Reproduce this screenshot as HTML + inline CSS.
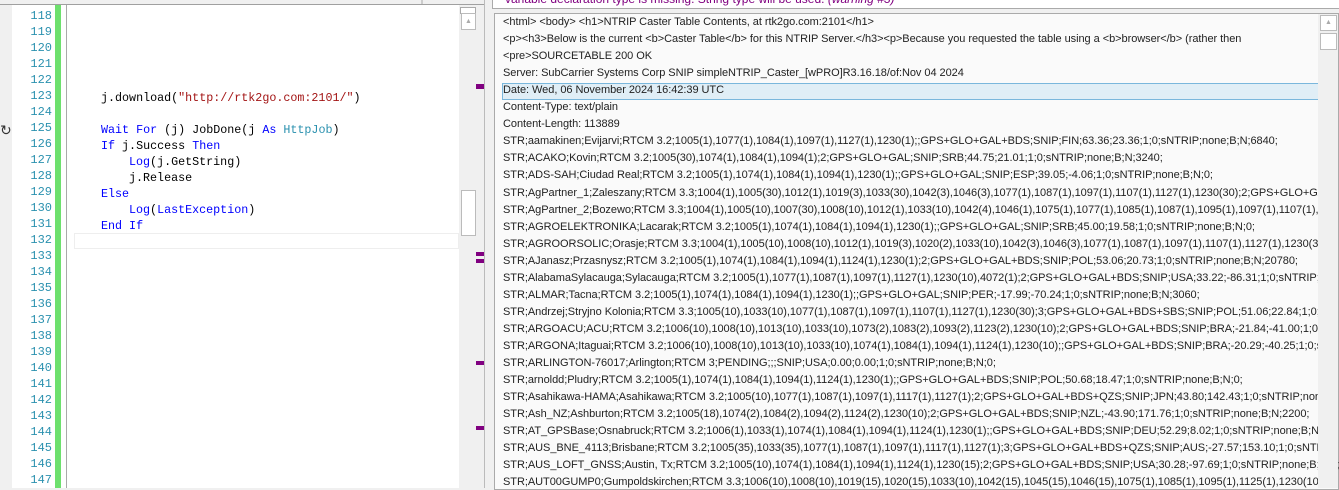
<!DOCTYPE html>
<html><head><style>
body{margin:0;width:1339px;height:488px;overflow:hidden;background:#f0f0f0;position:relative;font-family:"Liberation Sans",sans-serif}
.abs{position:absolute}
#ed{left:0;top:5px;width:476px;height:483px;background:#fff}
#gut{left:0;top:5px;width:12px;height:483px;background:#f0f0f0}
.ln{position:absolute;left:12px;width:40px;text-align:right;font:12px "Liberation Mono",monospace;color:#2b91af}
.cd{position:absolute;left:73px;font:11.7px "Liberation Mono",monospace;color:#000;white-space:pre}
.k{color:#0000ff}.t{color:#2b91af}.s{color:#a31515}
.lg{position:absolute;left:503px;font-size:11px;color:#222;white-space:pre;letter-spacing:-0.05px}
</style></head><body>
<div class="abs" style="left:0;top:0;width:484px;height:4px;background:#f0f0f0;border-bottom:1px solid #a0a0a0"></div>
<div class="abs" style="left:421px;top:0;width:2px;height:4px;background:#ccc"></div>
<div class="abs" id="ed"></div>
<div class="abs" id="gut"></div>
<div class="abs" style="left:55px;top:5px;width:6px;height:483px;background:#6de06d"></div>
<div class="abs" style="left:66px;top:5px;width:1px;height:483px;background:#aaa"></div>
<div class="abs" style="left:459px;top:5px;width:17px;height:483px;background:#f0f0f0"></div>
<div class="abs" style="left:460px;top:7px;width:14px;height:5px;border:1px solid #aaa;background:#fff"></div>
<div class="abs" style="left:461px;top:13px;width:13px;height:15px;border:1px solid #bbb;background:#fff;font-size:7px;color:#aaa;text-align:center;line-height:15px">▲</div>
<div class="abs" style="left:461px;top:190px;width:13px;height:44px;border:1px solid #bbb;background:#fff"></div>
<div class="abs" style="left:74px;top:233px;width:383px;height:14px;border:1px solid #eee"></div>
<div class="abs" style="left:476px;top:5px;width:8px;height:483px;background:#f0f0f0"></div>
<div class="abs" style="left:484px;top:0;width:1px;height:488px;background:#bbb"></div>
<div class="abs" style="left:476px;top:84px;width:8px;height:5px;background:#800080"></div>
<div class="abs" style="left:476px;top:252px;width:8px;height:4px;background:#800080"></div>
<div class="abs" style="left:476px;top:259px;width:8px;height:4px;background:#800080"></div>
<div class="abs" style="left:476px;top:361px;width:8px;height:4px;background:#800080"></div>
<div class="abs" style="left:476px;top:426px;width:8px;height:4px;background:#800080"></div>
<div class="abs" style="left:0;top:122px;font-size:14px;color:#333">↻</div>
<div id="lns"></div>
<div class="cd" style="top:91px;left:101px">j.download(<span class="s">"http://rtk2go.com:2101/"</span>)</div>
<div class="cd" style="top:123px;left:101px"><span class="k">Wait For</span> (j) JobDone(j <span class="k">As</span> <span class="t">HttpJob</span>)</div>
<div class="cd" style="top:139px;left:101px"><span class="k">If</span> j.Success <span class="k">Then</span></div>
<div class="cd" style="top:155px;left:129px"><span class="k">Log</span>(j.GetString)</div>
<div class="cd" style="top:171px;left:129px">j.Release</div>
<div class="cd" style="top:187px;left:101px"><span class="k">Else</span></div>
<div class="cd" style="top:203px;left:129px"><span class="k">Log</span>(<span class="k">LastException</span>)</div>
<div class="cd" style="top:219px;left:101px"><span class="k">End If</span></div>
<div class="abs" style="left:492px;top:0;width:847px;height:8px;background:#fff;border-left:1px solid #aaa;border-bottom:1px solid #aaa;overflow:hidden"><div style="position:absolute;left:12px;top:-8px;font-size:12px;color:#800080;white-space:pre">variable declaration type is missing. String type will be used. <i>(warning #3)</i></div></div>
<div class="abs" style="left:494px;top:13px;width:843px;height:475px;background:#fafafa;border:1px solid #aaa"></div>
<div class="abs" style="left:502px;top:83px;width:816px;height:15px;background:#e0eef6;border:1px solid #7ab7dc"></div>
<div id="lg"></div>
<script>
var h='';for(var i=0;i<30;i++){h+='<div class="ln" style="top:'+(9+i*16)+'px">'+(118+i)+'</div>'}
document.getElementById('lns').innerHTML=h;
var L=['<html> <body> <h1>NTRIP Caster Table Contents, at rtk2go.com:2101</h1>',
'<p><h3>Below is the current <b>Caster Table</b> for this NTRIP Server.</h3><p>Because you requested the table using a <b>browser</b> (rather then',
'<pre>SOURCETABLE 200 OK',
'Server: SubCarrier Systems Corp SNIP simpleNTRIP_Caster_[wPRO]R3.16.18/of:Nov 04 2024',
'Date: Wed, 06 November 2024 16:42:39 UTC',
'Content-Type: text/plain',
'Content-Length: 113889',
'STR;aamakinen;Evijarvi;RTCM 3.2;1005(1),1077(1),1084(1),1097(1),1127(1),1230(1);;GPS+GLO+GAL+BDS;SNIP;FIN;63.36;23.36;1;0;sNTRIP;none;B;N;6840;',
'STR;ACAKO;Kovin;RTCM 3.2;1005(30),1074(1),1084(1),1094(1);2;GPS+GLO+GAL;SNIP;SRB;44.75;21.01;1;0;sNTRIP;none;B;N;3240;',
'STR;ADS-SAH;Ciudad Real;RTCM 3.2;1005(1),1074(1),1084(1),1094(1),1230(1);;GPS+GLO+GAL;SNIP;ESP;39.05;-4.06;1;0;sNTRIP;none;B;N;0;',
'STR;AgPartner_1;Zaleszany;RTCM 3.3;1004(1),1005(30),1012(1),1019(3),1033(30),1042(3),1046(3),1077(1),1087(1),1097(1),1107(1),1127(1),1230(30);2;GPS+GLO+GAL',
'STR;AgPartner_2;Bozewo;RTCM 3.3;1004(1),1005(10),1007(30),1008(10),1012(1),1033(10),1042(4),1046(1),1075(1),1077(1),1085(1),1087(1),1095(1),1097(1),1107(1),11',
'STR;AGROELEKTRONIKA;Lacarak;RTCM 3.2;1005(1),1074(1),1084(1),1094(1),1230(1);;GPS+GLO+GAL;SNIP;SRB;45.00;19.58;1;0;sNTRIP;none;B;N;0;',
'STR;AGROORSOLIC;Orasje;RTCM 3.3;1004(1),1005(10),1008(10),1012(1),1019(3),1020(2),1033(10),1042(3),1046(3),1077(1),1087(1),1097(1),1107(1),1127(1),1230(30)',
'STR;AJanasz;Przasnysz;RTCM 3.2;1005(1),1074(1),1084(1),1094(1),1124(1),1230(1);2;GPS+GLO+GAL+BDS;SNIP;POL;53.06;20.73;1;0;sNTRIP;none;B;N;20780;',
'STR;AlabamaSylacauga;Sylacauga;RTCM 3.2;1005(1),1077(1),1087(1),1097(1),1127(1),1230(10),4072(1);2;GPS+GLO+GAL+BDS;SNIP;USA;33.22;-86.31;1;0;sNTRIP;no',
'STR;ALMAR;Tacna;RTCM 3.2;1005(1),1074(1),1084(1),1094(1),1230(1);;GPS+GLO+GAL;SNIP;PER;-17.99;-70.24;1;0;sNTRIP;none;B;N;3060;',
'STR;Andrzej;Stryjno Kolonia;RTCM 3.3;1005(10),1033(10),1077(1),1087(1),1097(1),1107(1),1127(1),1230(30);3;GPS+GLO+GAL+BDS+SBS;SNIP;POL;51.06;22.84;1;0;',
'STR;ARGOACU;ACU;RTCM 3.2;1006(10),1008(10),1013(10),1033(10),1073(2),1083(2),1093(2),1123(2),1230(10);2;GPS+GLO+GAL+BDS;SNIP;BRA;-21.84;-41.00;1;0;sN',
'STR;ARGONA;Itaguai;RTCM 3.2;1006(10),1008(10),1013(10),1033(10),1074(1),1084(1),1094(1),1124(1),1230(10);;GPS+GLO+GAL+BDS;SNIP;BRA;-20.29;-40.25;1;0;sN',
'STR;ARLINGTON-76017;Arlington;RTCM 3;PENDING;;;SNIP;USA;0.00;0.00;1;0;sNTRIP;none;B;N;0;',
'STR;arnoldd;Pludry;RTCM 3.2;1005(1),1074(1),1084(1),1094(1),1124(1),1230(1);;GPS+GLO+GAL+BDS;SNIP;POL;50.68;18.47;1;0;sNTRIP;none;B;N;0;',
'STR;Asahikawa-HAMA;Asahikawa;RTCM 3.2;1005(10),1077(1),1087(1),1097(1),1117(1),1127(1);2;GPS+GLO+GAL+BDS+QZS;SNIP;JPN;43.80;142.43;1;0;sNTRIP;none',
'STR;Ash_NZ;Ashburton;RTCM 3.2;1005(18),1074(2),1084(2),1094(2),1124(2),1230(10);2;GPS+GLO+GAL+BDS;SNIP;NZL;-43.90;171.76;1;0;sNTRIP;none;B;N;2200;',
'STR;AT_GPSBase;Osnabruck;RTCM 3.2;1006(1),1033(1),1074(1),1084(1),1094(1),1124(1),1230(1);;GPS+GLO+GAL+BDS;SNIP;DEU;52.29;8.02;1;0;sNTRIP;none;B;N;0;',
'STR;AUS_BNE_4113;Brisbane;RTCM 3.2;1005(35),1033(35),1077(1),1087(1),1097(1),1117(1),1127(1);3;GPS+GLO+GAL+BDS+QZS;SNIP;AUS;-27.57;153.10;1;0;sNTRIP',
'STR;AUS_LOFT_GNSS;Austin, Tx;RTCM 3.2;1005(10),1074(1),1084(1),1094(1),1124(1),1230(15);2;GPS+GLO+GAL+BDS;SNIP;USA;30.28;-97.69;1;0;sNTRIP;none;B;N;0;',
'STR;AUT00GUMP0;Gumpoldskirchen;RTCM 3.3;1006(10),1008(10),1019(15),1020(15),1033(10),1042(15),1045(15),1046(15),1075(1),1085(1),1095(1),1125(1),1230(10)'];
var g='';for(var j=0;j<L.length;j++){var t=L[j].replace(/&/g,'&amp;').replace(/</g,'&lt;');g+='<div class="lg" style="top:'+(16+j*17.05)+'px">'+t+'</div>'}
document.getElementById('lg').innerHTML=g;
</script>
<div class="abs" style="left:1318px;top:14px;width:20px;height:474px;background:#f0f0f0"></div>
<div class="abs" style="left:1320px;top:15px;width:15px;height:14px;border:1px solid #bbb;background:#fff;font-size:7px;color:#aaa;text-align:center;line-height:14px">▲</div>
<div class="abs" style="left:1320px;top:33px;width:15px;height:15px;border:1px solid #bbb;background:#fff"></div>
</body></html>
